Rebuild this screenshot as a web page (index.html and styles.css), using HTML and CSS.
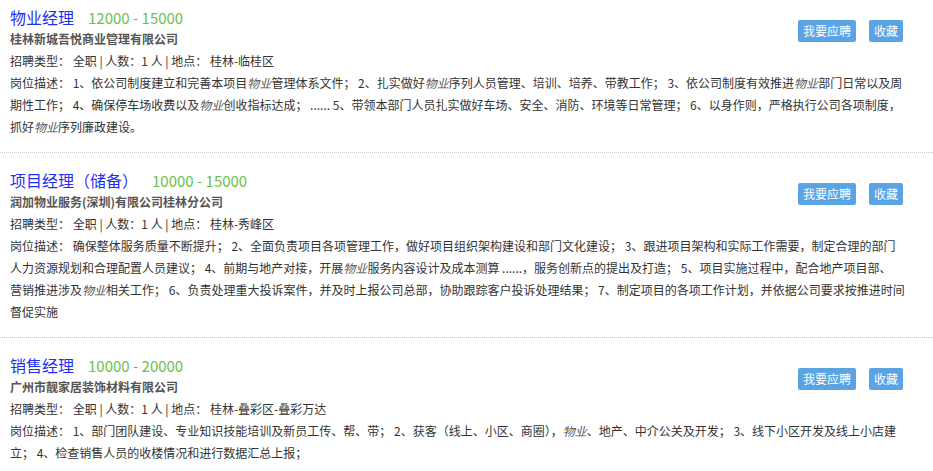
FILE: index.html
```html
<!DOCTYPE html>
<html lang="zh-CN">

<head>
    <meta charset="UTF-8">
    <title>职位列表</title>
    <meta name="viewport" content="width=device-width, initial-scale=1.0">
    <link rel="stylesheet" href="styles.css">
</head>

<body>
    <div class="job-list">
        <div class="job">
            <div class="job-head">
                <div class="job-main">
                    <div class="job-title"><a class="job-name" href="#">物业经理</a><span class="salary">12000 - 15000</span></div>
                    <div class="company">桂林新城吾悦商业管理有限公司</div>
                    <div class="meta">招聘类型： 全职 | 人数：1 人 | 地点： 桂林-临桂区</div>
                </div>
                <div class="job-actions">
                    <button class="apply-btn">我要应聘</button>
                    <button class="fav-btn">收藏</button>
                </div>
            </div>
            <div class="desc">岗位描述： 1、依公司制度建立和完善本项目<em>物业</em>管理体系文件； 2、扎实做好<em>物业</em>序列人员管理、培训、培养、带教工作； 3、依公司制度有效推进<em>物业</em>部门日常以及周期性工作； 4、确保停车场收费以及<em>物业</em>创收指标达成； ...... 5、带领本部门人员扎实做好车场、安全、消防、环境等日常管理； 6、以身作则，严格执行公司各项制度，抓好<em>物业</em>序列廉政建设。</div>
        </div>

        <div class="job">
            <div class="job-head">
                <div class="job-main">
                    <div class="job-title"><a class="job-name" href="#">项目经理（储备）</a><span class="salary">10000 - 15000</span></div>
                    <div class="company">润加物业服务(深圳)有限公司桂林分公司</div>
                    <div class="meta">招聘类型： 全职 | 人数：1 人 | 地点： 桂林-秀峰区</div>
                </div>
                <div class="job-actions">
                    <button class="apply-btn">我要应聘</button>
                    <button class="fav-btn">收藏</button>
                </div>
            </div>
            <div class="desc">岗位描述： 确保整体服务质量不断提升； 2、全面负责项目各项管理工作，做好项目组织架构建设和部门文化建设； 3、跟进项目架构和实际工作需要，制定合理的部门人力资源规划和合理配置人员建议； 4、前期与地产对接，开展<em>物业</em>服务内容设计及成本测算 ......，服务创新点的提出及打造； 5、项目实施过程中，配合地产项目部、<br>营销推进涉及<em>物业</em>相关工作； 6、负责处理重大投诉案件，并及时上报公司总部，协助跟踪客户投诉处理结果； 7、制定项目的各项工作计划，并依据公司要求按推进时间督促实施</div>
        </div>

        <div class="job">
            <div class="job-head">
                <div class="job-main">
                    <div class="job-title"><a class="job-name" href="#">销售经理</a><span class="salary">10000 - 20000</span></div>
                    <div class="company">广州市靓家居装饰材料有限公司</div>
                    <div class="meta">招聘类型： 全职 | 人数：1 人 | 地点： 桂林-叠彩区-叠彩万达</div>
                </div>
                <div class="job-actions">
                    <button class="apply-btn">我要应聘</button>
                    <button class="fav-btn">收藏</button>
                </div>
            </div>
            <div class="desc">岗位描述： 1、部门团队建设、专业知识技能培训及新员工传、帮、带； 2、获客（线上、小区、商圈），<em>物业</em>、地产、中介公关及开发； 3、线下小区开发及线上小店建立； 4、检查销售人员的收楼情况和进行数据汇总上报；</div>
        </div>
    </div>
</body>

</html>
```

FILE: styles.css
```css
body {
    margin: 0;
    padding: 0;
    background: #fff;
    font-family: "Noto Sans CJK SC", "Microsoft YaHei", sans-serif;
    font-size: 12px;
    color: #333;
}

.job {
    padding: 16px 27px 14px 10px;
    border-bottom: 1px dotted #c8c8c8;
    line-height: 22px;
}

.job:first-child {
    padding-top: 6px;
}

.job-head {
    display: flex;
    justify-content: space-between;
    align-items: flex-start;
}

.job-title {
    height: 22px;
}

.job-name {
    font-size: 16px;
    color: #1f30f5;
    text-decoration: none;
}

.salary {
    margin-left: 14px;
    font-size: 15px;
    color: #6cbf4a;
}

.company {
    font-weight: bold;
    color: #555;
}

.job-actions {
    display: flex;
    gap: 13px;
    margin-top: 14px;
    margin-right: 3px;
}

button {
    height: 22px;
    padding: 0 5px;
    font-family: inherit;
    font-size: 12px;
    line-height: 22px;
    color: #fff;
    background: #5ba4e4;
    border: none;
    border-radius: 2px;
    cursor: pointer;
}

.desc em {
    color: #555;
}
```
